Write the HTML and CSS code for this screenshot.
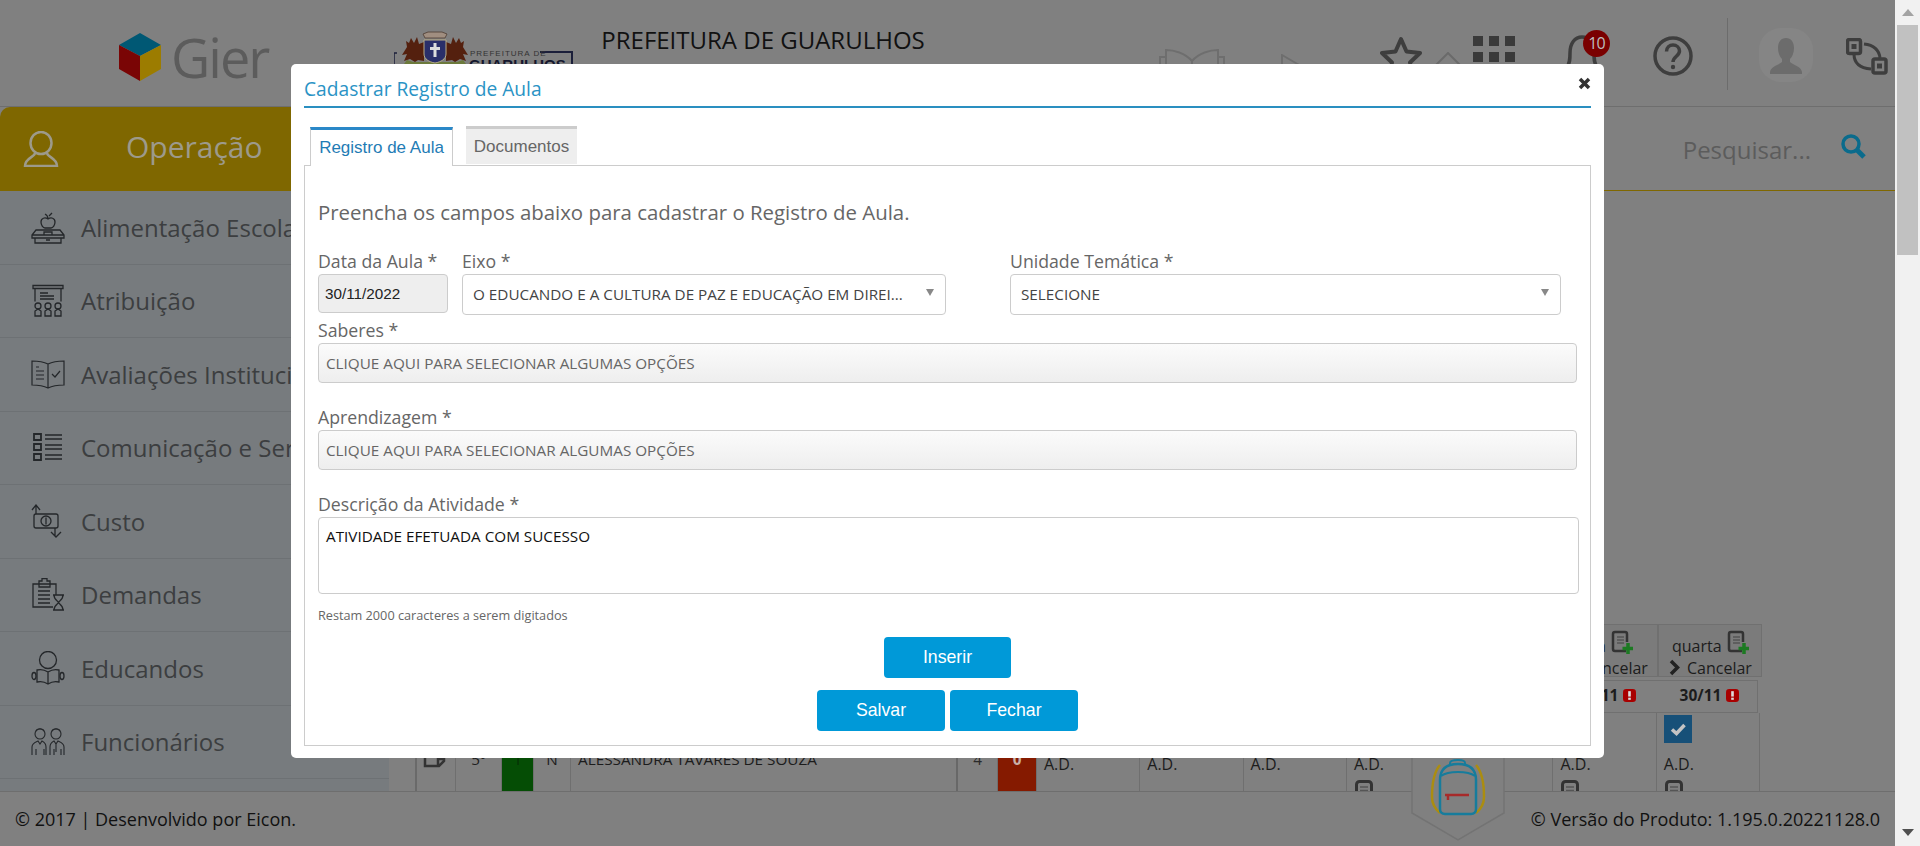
FILE: index.html
```html
<!DOCTYPE html>
<html lang="pt-BR">
<head>
    <meta charset="UTF-8">
    <title>Cadastrar Registro de Aula</title>
    <link rel="stylesheet" href="styles.css">
</head>
<body>

    <svg class="symbols" width="0" height="0">
        <symbol id="note" viewBox="0 0 18 24">
            <rect x="1.5" y="1.5" width="15" height="21" rx="3" fill="none" stroke="#333" stroke-width="3"/>
            <path d="M5 7h8M5 10.500h8M5 14h8" stroke="#555" stroke-width="1.500"/>
        </symbol>
        <symbol id="note-add" viewBox="0 0 22 26">
            <path d="M15 21H4a2 2 0 0 1-2-2V4a2 2 0 0 1 2-2h10a2 2 0 0 1 2 2v8" fill="none" stroke="#333" stroke-width="2.500"/>
            <path d="M6 7h7M6 10h7M6 13h7" stroke="#555" stroke-width="1.500"/>
            <path d="M17 13v11M11.500 18.500h11" stroke="#1c7a22" stroke-width="3.500"/>
        </symbol>
        <symbol id="alert" viewBox="0 0 12 12">
            <rect width="12" height="12" rx="3" fill="#a80000"/>
            <rect x="4.800" y="2" width="2.400" height="5" fill="#ddd"/>
            <rect x="4.800" y="8" width="2.400" height="2" fill="#ddd"/>
        </symbol>
        <symbol id="chevron" viewBox="0 0 11 17">
            <path d="M2 2l6.500 6.500L2 15" fill="none" stroke="#222" stroke-width="3.500"/>
        </symbol>
    </svg>

    <div class="page">
        <header class="topbar">
            <div class="brand">
                <svg class="brand-cube" viewBox="0 0 42 48">
                    <path d="M21 0l21 12-21 11L0 12z" fill="#005874"/>
                    <path d="M0 12l21 11v25L0 36z" fill="#7a0505"/>
                    <path d="M42 12L21 23v25l21-12z" fill="#9c7c00"/>
                </svg>
                <span class="brand-name">Gier</span>
            </div>
            <svg class="city-logo" viewBox="0 0 180 72">
                <path d="M3 22H0v34" fill="none" stroke="#1b1f3a" stroke-width="1.500"/>
                <path d="M146 21h32v40" fill="none" stroke="#1b1f3a" stroke-width="2"/>
                <path d="M13 29l6 2 44 0 6-2 3 4H10z" fill="#6c7a3c"/>
                <path d="M17 7l3 5 3-6 2 7 5-2v19l-6-1-3 2-5-3-6 2 3-7-5 1 5-8-1-6 3 2z" fill="#54200e"/>
                <path d="M65 7l-3 5-3-6-2 7-5-2v19l6-1 3 2 5-3 6 2-3-7 5 1-5-8 1-6-3 2z" fill="#54200e"/>
                <path d="M30 9h22v14c0 5-5 8-11 9-6-1-11-4-11-9z" fill="#2a2f6a" stroke="#b9ad86"/>
                <path d="M39.500 12h3v4h3.500v3h-3.500v7h-3v-7H36v-3h3.500z" fill="#dddddd"/>
                <path d="M29 3l5-2h14l5 2-2 4H31z" fill="#a08e80" stroke="#5a4a40"/>
                <text class="city-small" x="76" y="25">PREFEITURA DE</text>
                <text class="city-big" x="75" y="39">GUARULHOS</text>
            </svg>
            <span class="city-title">PREFEITURA DE GUARULHOS</span>
            <div class="top-icons">
                <svg class="icon-book" viewBox="0 0 66 50" fill="none" stroke="#6e6e6e" stroke-width="2">
                    <path d="M33 14C26 6 15 3 7 3v24M33 14c7-8 18-11 26-11v24M33 14v30M7 10H1v34M59 10h6v34"/>
                </svg>
                <svg class="icon-flag" viewBox="0 0 26 40" fill="none" stroke="#6e6e6e" stroke-width="2">
                    <path d="M1 1l24 14-16 6-8 18z"/>
                </svg>
                <svg class="icon-star" viewBox="0 0 42 42" fill="none" stroke="#3e3e3e" stroke-width="4" stroke-linejoin="round">
                    <path d="M21 3l5.500 12.500L40 17l-10 9.500L32.500 40 21 33.500 9.500 40 12 26.500 2 17l13.500-1.500z"/>
                </svg>
                <svg class="icon-house" viewBox="0 0 42 30" fill="none" stroke="#6a6a6a" stroke-width="2">
                    <path d="M1 21L21 1l20 20M7 16v14M35 16v14"/>
                </svg>
                <div class="icon-grid"><i></i><i></i><i></i><i></i><i></i><i></i><i></i><i></i><i></i></div>
                <div class="bell">
                    <svg viewBox="0 0 40 44" fill="none" stroke="#3e3e3e" stroke-width="3.500">
                        <path d="M5 33c3-4 3-8 3-14C8 9 13 3 20 3s12 6 12 16c0 6 0 10 3 14 1 2 0 3-2 3H7c-2 0-3-1-2-3z"/>
                    </svg>
                    <span class="bell-badge">10</span>
                </div>
                <svg class="icon-help" viewBox="0 0 40 40" fill="none" stroke="#3e3e3e" stroke-width="3.500">
                    <circle cx="20" cy="20" r="18"/>
                    <path d="M13.500 15.500c0-4 3-6.500 6.500-6.500s6.500 2.500 6.500 6c0 5-6.500 5.500-6.500 11"/>
                    <circle cx="20" cy="31" r="2.200" fill="#3e3e3e" stroke="none"/>
                </svg>
                <div class="top-divider"></div>
                <div class="avatar">
                    <svg viewBox="0 0 54 54" fill="#6c6c6c">
                        <path d="M27 10c5 0 8 4 8 10 0 5-2 9-4 11v3c3 3 11 4 12 10v2H11v-2c1-6 9-7 12-10v-3c-2-2-4-6-4-11 0-6 3-10 8-10z"/>
                    </svg>
                </div>
                <svg class="icon-swap" viewBox="0 0 42 37">
                    <rect x="1.500" y="1.500" width="13" height="14" rx="2" fill="none" stroke="#3e3e3e" stroke-width="3.500"/>
                    <rect x="5.500" y="6" width="5" height="5" fill="#3e3e3e"/>
                    <rect x="27" y="21" width="13" height="14" rx="2" fill="none" stroke="#3e3e3e" stroke-width="3.500"/>
                    <rect x="31" y="25.500" width="5" height="5" fill="#3e3e3e"/>
                    <path d="M8 16c0 8 5 14 17 15M18 6c9 1 15 5 16 14" fill="none" stroke="#3e3e3e" stroke-width="3"/>
                </svg>
            </div>
        </header>

        <nav class="navbar">
            <div class="nav-tab">
                <svg class="nav-user" viewBox="0 0 36 36" fill="none" stroke="#9d9a8b" stroke-width="2.500">
                    <ellipse cx="18" cy="12" rx="10.500" ry="11"/>
                    <path d="M12 22c0 4-10 5-10 13h32c0-8-10-9-10-13"/>
                </svg>
                <span class="nav-title">Operação</span>
            </div>
            <div class="search">
                <span class="search-text">Pesquisar...</span>
                <svg class="search-icon" viewBox="0 0 25 25" fill="none" stroke="#0a6b8c">
                    <circle cx="10" cy="10" r="8" stroke-width="3.500"/>
                    <path d="M16 16l7 7" stroke-width="5"/>
                </svg>
            </div>
        </nav>

        <div class="main">
            <aside class="sidebar">
                <a class="side-item">
                    <svg viewBox="0 0 34 34" fill="none" stroke="#24272a" stroke-width="1.300">
                        <path d="M17 9c-3-2-7-1-7 3 0 3 2 6 4 6h6c2 0 4-3 4-6 0-4-4-5-7-3zM17 9c0-2-1-4-3-5M18 6l3-3"/>
                        <path d="M5 20h24l4 5v3H1v-3zM1 25h32M4 28v5h26v-5M13 25v-3h8v3M15 30h4"/>
                    </svg>
                    Alimentação Escolar
                </a>
                <a class="side-item">
                    <svg viewBox="0 0 34 34" fill="none" stroke="#24272a" stroke-width="1.300">
                        <path d="M2 1.500h30v3H2zM4 4.500v13M30 4.500v13M9 9h8M9 12h14M9 15h14"/>
                        <path d="M4 32v-5l3-2 3 2v5zM14 32v-5l3-2 3 2v5zM24 32v-5l3-2 3 2v5z"/>
                        <circle cx="7" cy="22" r="3"/><circle cx="17" cy="22" r="3"/><circle cx="27" cy="22" r="3"/>
                    </svg>
                    Atribuição
                </a>
                <a class="side-item">
                    <svg viewBox="0 0 34 34" fill="none" stroke="#24272a" stroke-width="1.200">
                        <path d="M17 7C13 5 6 4 1 4v24c5 0 12 1 16 3 4-2 11-3 16-3V4c-5 0-12 1-16 3zM17 7v24"/>
                        <path d="M5 10h3M5 14h8M5 18h8M5 22h8M21 17l3 3 5-6"/>
                    </svg>
                    Avaliações Institucionais
                </a>
                <a class="side-item">
                    <svg viewBox="0 0 34 34" fill="none" stroke="#24272a">
                        <path d="M3 3h7v6H3zM3 13h7v6H3zM3 23h7v6H3z" stroke-width="1.800"/>
                        <path d="M14 4h17M14 8h17M14 14h17M14 18h17M14 24h17M14 28h17" stroke-width="1.400"/>
                    </svg>
                    Comunicação e Serviços
                </a>
                <a class="side-item">
                    <svg viewBox="0 0 34 34" fill="none" stroke="#24272a" stroke-width="1.300">
                        <path d="M5 10V2M1 6l4-5 4 5M24 24v8M20 28l5 5 5-5"/>
                        <rect x="3" y="10" width="24" height="14" rx="2"/>
                        <circle cx="15" cy="17" r="5"/>
                        <path d="M15 13.500v7"/>
                    </svg>
                    Custo
                </a>
                <a class="side-item">
                    <svg viewBox="0 0 34 34" fill="none" stroke="#24272a" stroke-width="1.300">
                        <path d="M22 29H2V6h6V3h3V0.500h5V3h3v3h6v11M8 6h11v3H8zM7 13h12M7 17h12M7 21h12M7 25h12"/>
                        <path d="M22 17h11M22 32h11M23 17c0 5 4 6 4.500 7.500C27 26 23 27 23 32M32 17c0 5-4 6-4.500 7.500C28 26 32 27 32 32"/>
                    </svg>
                    Demandas
                </a>
                <a class="side-item">
                    <svg viewBox="0 0 34 34" fill="none" stroke="#24272a" stroke-width="1.300">
                        <circle cx="17" cy="9" r="8.500"/>
                        <path d="M17 21c-3-2-7-3-11-2v12c4-1 8 0 11 2 3-2 7-3 11-2V19c-4-1-8 0-11 2zM17 21v12"/>
                        <ellipse cx="3" cy="25" rx="2" ry="3.500"/><ellipse cx="31" cy="25" rx="2" ry="3.500"/>
                    </svg>
                    Educandos
                </a>
                <a class="side-item">
                    <svg viewBox="0 0 34 34" fill="none" stroke="#24272a" stroke-width="1.100">
                        <circle cx="9" cy="9" r="5"/><circle cx="25" cy="9" r="5"/>
                        <path d="M5 6c1-3 7-3 8 0M21 6c1-3 7-3 8 0"/>
                        <path d="M1 30v-8c0-4 4-5 6-6l2 3 2-3c2 1 4 2 4 6v8M19 30v-8c0-4 2-5 4-6l2 3 2-3c2 1 6 2 6 6v8M5 24v6M13 24v6M23 24v6M30 24v6M25 19v8"/>
                    </svg>
                    Funcionários
                </a>
            </aside>

            <section class="content">
                <div class="table">
                    <div class="head-row">
                        <div class="head-cell">
                            <div class="head-day">terça <svg><use href="#note-add"/></svg></div>
                            <div class="head-link"><svg><use href="#chevron"/></svg>Cancelar</div>
                        </div>
                        <div class="head-cell">
                            <div class="head-day">quarta <svg><use href="#note-add"/></svg></div>
                            <div class="head-link"><svg><use href="#chevron"/></svg>Cancelar</div>
                        </div>
                    </div>
                    <div class="date-row">
                        <div class="date-cell">29/11 <svg><use href="#alert"/></svg></div>
                        <div class="date-cell">30/11 <svg><use href="#alert"/></svg></div>
                    </div>
                    <div class="student-row">
                        <div class="cell cell-icon">
                            <svg viewBox="0 0 23 23" fill="none" stroke="#333" stroke-width="2.500"><path d="M2 2h19v14l-5 5H2zM21 14h-6v6"/></svg>
                        </div>
                        <div class="cell cell-center">5º</div>
                        <div class="cell cell-center cell-green">1</div>
                        <div class="cell cell-center">N</div>
                        <div class="cell cell-name">ALESSANDRA TAVARES DE SOUZA</div>
                        <div class="cell cell-center cell-count">4</div>
                        <div class="cell cell-center cell-red">0</div>
                        <div class="cell cell-day"><span class="check check-empty"></span>A.D.</div>
                        <div class="cell cell-day"><span class="check check-empty"></span>A.D.</div>
                        <div class="cell cell-day"><span class="check check-empty"></span>A.D.</div>
                        <div class="cell cell-day"><span class="check check-empty"></span>A.D.<svg class="day-note"><use href="#note"/></svg></div>
                        <div class="cell cell-day"><span class="check check-empty"></span>A.D.<svg class="day-note"><use href="#note"/></svg></div>
                        <div class="cell cell-day"><span class="check check-empty"></span>A.D.<svg class="day-note"><use href="#note"/></svg></div>
                        <div class="cell cell-day">
                            <span class="check">
                                <svg viewBox="0 0 28 28" fill="none" stroke="#c4c4c4" stroke-width="3.500"><path d="M8 14.500l4.500 4L20.500 10"/></svg>
                            </span>A.D.<svg class="day-note"><use href="#note"/></svg>
                        </div>
                    </div>
                </div>
            </section>
        </div>

        <footer class="footer">
            <span>© 2017 | Desenvolvido por Eicon.</span>
            <span>© Versão do Produto: 1.195.0.20221128.0</span>
        </footer>

        <!-- selo da mochila, fica por cima do rodape -->
        <svg class="backpack" viewBox="0 0 94 94" fill="none">
            <path d="M1 1h92v65L47 93 1 66z" fill="#808080" stroke="#737373" stroke-width="1.500"/>
            <path d="M29 18C22 26 21 38 21 50c0 6 3 12 8 16M65 18c7 8 8 20 8 32 0 6-3 12-8 16" stroke="#ab8d10" stroke-width="2.500"/>
            <path d="M39 19v-3c0-2 2-3 8-3s7 1 7 3v3" stroke="#177c9c" stroke-width="2"/>
            <path d="M29 33c0-11 6-16 18-16s18 5 18 16v29c0 3-2 5-5 5H34c-3 0-5-2-5-5z" stroke="#177c9c" stroke-width="2.500"/>
            <path d="M30 29c4-3 10-4 17-4s13 1 17 4" stroke="#177c9c" stroke-width="2"/>
            <path d="M34 48h24M37 48v5" stroke="#a72a2a" stroke-width="2.500"/>
        </svg>

        <div class="backdrop"></div>

        <div class="modal">
            <div class="modal-header">
                <span class="modal-title">Cadastrar Registro de Aula</span>
                <svg class="modal-close" viewBox="0 0 13 13"><path d="M2 2l9 9M11 2l-9 9" stroke="#333" stroke-width="3.500"/></svg>
            </div>

            <div class="tabs">
                <div class="tab tab-active">Registro de Aula</div>
                <div class="tab">Documentos</div>
            </div>

            <div class="tab-pane">
                <p class="intro">Preencha os campos abaixo para cadastrar o Registro de Aula.</p>

                <div class="form-row">
                    <div class="field field-date">
                        <label>Data da Aula *</label>
                        <div class="input input-date">30/11/2022</div>
                    </div>
                    <div class="field field-eixo">
                        <label>Eixo *</label>
                        <div class="input input-select">O EDUCANDO E A CULTURA DE PAZ E EDUCAÇÃO EM DIREI...<span class="arrow"></span></div>
                    </div>
                    <div class="field field-unidade">
                        <label>Unidade Temática *</label>
                        <div class="input input-select">SELECIONE<span class="arrow"></span></div>
                    </div>
                </div>

                <div class="field field-saberes">
                    <label>Saberes *</label>
                    <div class="input input-multi">CLIQUE AQUI PARA SELECIONAR ALGUMAS OPÇÕES</div>
                </div>
                <div class="field field-aprendizagem">
                    <label>Aprendizagem *</label>
                    <div class="input input-multi">CLIQUE AQUI PARA SELECIONAR ALGUMAS OPÇÕES</div>
                </div>
                <div class="field field-descricao">
                    <label>Descrição da Atividade *</label>
                    <div class="input input-text">ATIVIDADE EFETUADA COM SUCESSO</div>
                </div>
                <p class="counter">Restam 2000 caracteres a serem digitados</p>

                <div class="actions">
                    <button class="btn">Inserir</button>
                </div>
                <div class="actions actions-last">
                    <button class="btn btn-wide">Salvar</button>
                    <button class="btn btn-wide">Fechar</button>
                </div>
            </div>
        </div>
    </div>

    <div class="scrollbar">
        <div class="scroll-up"></div>
        <div class="scroll-thumb"></div>
        <div class="scroll-down"></div>
    </div>

</body>
</html>
```

FILE: styles.css
```css
/* cores ja escurecidas pelo fundo do modal, so o modal e a barra de rolagem ficam claros */
body {
    font-family: "Open Sans", sans-serif;
    margin: 0;
    height: 846px;
    display: flex;
    overflow: hidden;
    background-color: #f1f1f1;
}

.symbols {
    position: absolute;
}

.page {
    position: relative;
    flex: 1;
    height: 846px;
    display: flex;
    flex-direction: column;
    background-color: #808080;
    overflow: hidden;
}

/* topo */
.topbar {
    height: 106px;
    flex-shrink: 0;
    display: flex;
    align-items: flex-start;
    border-bottom: 1px solid #6e6e6e;
}

.brand {
    display: flex;
    align-items: center;
    margin: 33px 0 0 119px;
}

.brand-cube {
    width: 42px;
    height: 48px;
}

.brand-name {
    font-size: 54px;
    line-height: 48px;
    letter-spacing: -2px;
    color: #5c5c5c;
    margin-left: 10px;
}

.city-logo {
    width: 180px;
    height: 72px;
    margin: 31px 0 0 126px;
}

.city-small {
    font-family: "Liberation Sans", sans-serif;
    font-size: 8px;
    letter-spacing: 1px;
    fill: #333;
}

.city-big {
    font-family: "Liberation Sans", sans-serif;
    font-size: 15px;
    font-weight: bold;
    fill: #14172e;
}

.city-title {
    font-size: 24px;
    line-height: 30px;
    margin: 25px 0 0 27px;
    color: #111;
    white-space: nowrap;
}

.top-icons {
    display: flex;
    align-items: flex-start;
    margin-left: auto;
}

.icon-book {
    width: 66px;
    height: 50px;
    margin-top: 47px;
}

.icon-flag {
    width: 26px;
    height: 40px;
    margin: 54px 0 0 56px;
}

.icon-star {
    width: 42px;
    height: 42px;
    margin: 36px 0 0 73px;
}

.icon-house {
    width: 42px;
    height: 30px;
    margin: 52px 0 0 5px;
}

.icon-grid {
    display: grid;
    grid-template-columns: repeat(3, 10px);
    grid-auto-rows: 10px;
    gap: 6px;
    margin: 36px 0 0 4px;
}

.icon-grid i {
    background-color: #3a3a3a;
}

.bell {
    position: relative;
    width: 40px;
    height: 44px;
    margin: 34px 3px 0 47px;
}

.bell svg {
    width: 40px;
    height: 44px;
}

.bell-badge {
    position: absolute;
    top: -4px;
    left: 21px;
    width: 27px;
    height: 27px;
    line-height: 27px;
    border-radius: 50%;
    background-color: #7a0000;
    color: #bdbdbd;
    font-size: 16px;
    text-align: center;
    letter-spacing: -1px;
}

.icon-help {
    width: 40px;
    height: 40px;
    margin: 36px 0 0 48px;
}

.top-divider {
    width: 1px;
    height: 72px;
    margin: 18px 0 0 34px;
    background-color: #6c6c6c;
}

.avatar {
    width: 54px;
    height: 54px;
    margin: 28px 0 0 31px;
    border-radius: 22px;
    background-color: #858585;
}

.avatar svg {
    width: 54px;
    height: 54px;
}

.icon-swap {
    width: 42px;
    height: 37px;
    margin: 38px 7px 0 33px;
}

/* barra do menu */
.navbar {
    height: 83px;
    flex-shrink: 0;
    display: flex;
    justify-content: space-between;
    border-bottom: 1px solid #7f6700;
}

.nav-tab {
    width: 389px;
    display: flex;
    align-items: center;
    background-color: #7f6700;
    border-top-left-radius: 10px;
}

.nav-user {
    width: 36px;
    height: 36px;
    margin-left: 23px;
}

.nav-title {
    font-size: 30px;
    line-height: 40px;
    margin: 0 0 4px 67px;
    color: #9d9a8b;
}

.search {
    display: flex;
    align-items: flex-start;
    padding: 23px 29px 0 0;
}

.search-text {
    font-size: 24px;
    line-height: 40px;
    color: #5c5c5c;
}

.search-icon {
    width: 25px;
    height: 25px;
    margin: 4px 0 0 30px;
}

.main {
    flex: 1;
    display: flex;
    overflow: hidden;
}

/* menu lateral */
.sidebar {
    width: 389px;
    flex-shrink: 0;
    background-color: #777b7e;
}

.side-item {
    display: flex;
    align-items: center;
    gap: 16px;
    box-sizing: border-box;
    height: 73.500px;
    padding-left: 31px;
    border-bottom: 1px solid #6d7174;
    font-size: 24px;
    color: #3c3e40;
    white-space: nowrap;
}

.side-item svg {
    width: 34px;
    height: 34px;
    flex-shrink: 0;
}

/* tabela que aparece atras do modal */
.content {
    flex: 1;
    overflow: hidden;
    padding-left: 26px;
}

.table {
    width: 1347px;
    margin-top: 433px;
    font-size: 16px;
    color: #1c1c1c;
}

.head-row,
.date-row {
    display: flex;
    justify-content: flex-end;
}

.head-row {
    height: 53px;
}

.head-cell {
    box-sizing: border-box;
    width: 104px;
    border: 1px solid #707070;
    background-color: #7b7b7b;
    padding: 5px 0 0 10px;
    line-height: 20px;
}

.head-day {
    display: flex;
    align-items: flex-end;
    gap: 5px;
    padding-left: 3px;
    height: 26px;
}

.head-day svg {
    width: 22px;
    height: 26px;
}

.head-link {
    display: flex;
    align-items: center;
    gap: 7px;
    height: 21px;
    margin-top: 1px;
    white-space: nowrap;
}

.head-link svg {
    width: 11px;
    height: 17px;
    flex-shrink: 0;
}

.date-row {
    box-sizing: border-box;
    height: 33px;
    width: 400px;
    margin: 3px 4px 0 auto;
    border: 1px solid #707070;
    border-left: 0;
    font-size: 15.500px;
    font-weight: bold;
}

.date-cell {
    box-sizing: border-box;
    width: 103px;
    padding: 0 0 3px 8px;
    display: flex;
    align-items: center;
    justify-content: center;
    gap: 5px;
}

.date-cell svg {
    width: 13px;
    height: 13px;
}

.student-row {
    display: grid;
    grid-template-columns: 39px 46px 32px 37px 387px 40px 39px repeat(7, 103.300px);
    height: 90px;
    border-left: 2px solid #6a6a6a;
    font-size: 15.300px;
}

.cell {
    box-sizing: border-box;
    border-right: 1px solid #6f6f6f;
    padding-top: 36px;
    line-height: 20px;
    min-width: 0;
}

.cell-center {
    text-align: center;
}

.cell-icon svg {
    width: 23px;
    height: 23px;
    margin: -4px 0 0 6px;
    display: block;
}

.cell-green {
    background-color: #054d05;
    color: #053005;
}

.cell-red {
    background-color: #851a00;
    color: #c9b1a8;
    font-weight: bold;
}

.cell-name {
    padding-left: 7px;
    border-right: 2px solid #686868;
    white-space: nowrap;
}

.cell-day {
    padding: 2px 0 0 7px;
    font-size: 16px;
}

.cell-count {
    color: #2a2a2a;
}

.check {
    display: block;
    width: 28px;
    height: 28px;
    margin-bottom: 11px;
    background-color: #175078;
}

.check-empty {
    visibility: hidden;
}

.check svg {
    display: block;
}

.day-note {
    display: block;
    width: 18px;
    height: 24px;
    margin: 6px 0 0 1px;
}

/* rodape */
.footer {
    position: relative;
    height: 54px;
    flex-shrink: 0;
    display: flex;
    justify-content: space-between;
    align-items: center;
    padding: 0 15px;
    border-top: 1px solid #6e6e6e;
    background-color: #808080;
    font-size: 18px;
    color: #111;
}

.backpack {
    position: absolute;
    left: 1411px;
    top: 747px;
    width: 94px;
    height: 94px;
}

.backdrop {
    position: absolute;
    inset: 0;
}

/* modal */
.modal {
    position: absolute;
    top: 64px;
    left: 0;
    right: 0;
    margin: 0 auto;
    box-sizing: border-box;
    width: 1313px;
    height: 694px;
    padding: 0 13px;
    background-color: white;
    border-radius: 5px;
}

.modal-header {
    display: flex;
    justify-content: space-between;
    box-sizing: border-box;
    height: 44px;
    padding-top: 13px;
    border-bottom: 2px solid #2a8fc0;
}

.modal-title {
    font-size: 19.200px;
    line-height: 24px;
    color: #2a93c5;
}

.modal-close {
    width: 13px;
    height: 13px;
}

.tabs {
    display: flex;
    align-items: flex-start;
    gap: 13px;
    margin: 18px 0 -1px 6px;
    font-family: "Liberation Sans", sans-serif;
    font-size: 17px;
}

.tab {
    box-sizing: border-box;
    width: 111px;
    height: 38px;
    line-height: 36px;
    text-align: center;
    border-top: 3px solid #cccccc;
    background-color: #eeeeee;
    color: #666666;
}

.tab-active {
    position: relative;
    width: 143px;
    height: 39px;
    margin-top: 1px;
    border: 1px solid #cccccc;
    border-top: 3px solid #2a88c8;
    border-bottom: 0;
    background-color: white;
    color: #1f7cb5;
}

.tab-pane {
    box-sizing: border-box;
    height: 581px;
    padding: 34px 13px 0;
    border: 1px solid #cccccc;
}

.intro {
    margin: 0 0 28px;
    font-size: 20.400px;
    line-height: 24px;
    color: #666666;
}

.form-row {
    display: flex;
}

.field label {
    display: block;
    height: 20px;
    margin-bottom: 2px;
    font-size: 17.700px;
    line-height: 18px;
    color: #666666;
    white-space: nowrap;
}

.field-date {
    width: 130px;
}

.field-eixo {
    width: 484px;
    margin-left: 14px;
}

.field-unidade {
    width: 551px;
    margin-left: 64px;
}

.field-saberes {
    margin-top: 6px;
    width: 1259px;
}

.field-aprendizagem {
    margin-top: 25px;
    width: 1259px;
}

.field-descricao {
    margin-top: 25px;
    width: 1261px;
}

.input {
    box-sizing: border-box;
    position: relative;
    border: 1px solid #cccccc;
    border-radius: 4px;
    font-size: 15.270px;
    white-space: nowrap;
}

.input-date {
    height: 39px;
    line-height: 37px;
    padding-left: 6px;
    background-color: #eeeeee;
    font-family: "Liberation Sans", sans-serif;
    color: #222222;
}

.input-select {
    height: 41px;
    line-height: 39px;
    padding-left: 10px;
    color: #444444;
}

.arrow {
    position: absolute;
    top: 14px;
    right: 11px;
    border-style: solid;
    border-width: 7px 4.500px 0;
    border-color: #888888 transparent transparent;
}

.input-multi {
    height: 40px;
    line-height: 38px;
    padding-left: 7px;
    background: linear-gradient(#fbfbfb, #eeeeee);
    color: #666666;
}

.input-text {
    height: 77px;
    padding: 6px 7px;
    line-height: 24px;
    color: #111111;
}

.counter {
    margin: 13px 0 0;
    font-size: 12.700px;
    line-height: 17px;
    color: #666666;
}

.actions {
    display: flex;
    justify-content: center;
    gap: 5px;
    margin-top: 13px;
}

.actions-last {
    margin-top: 12px;
}

.btn {
    width: 127px;
    height: 41px;
    padding: 0;
    border: none;
    border-radius: 4px;
    background-color: #0099d8;
    color: white;
    font-family: "Liberation Sans", sans-serif;
    font-size: 17.700px;
    cursor: pointer;
}

.btn-wide {
    width: 128px;
}

/* barra de rolagem */
.scrollbar {
    width: 25px;
    height: 846px;
    flex-shrink: 0;
    display: flex;
    flex-direction: column;
    align-items: center;
}

.scroll-up,
.scroll-down {
    width: 0;
    border-style: solid;
    border-color: transparent;
}

.scroll-up {
    margin-top: 9px;
    border-width: 0 6px 7px;
    border-bottom-color: #a3a3a3;
}

.scroll-thumb {
    width: 21px;
    height: 230px;
    margin-top: 9px;
    background-color: #c1c1c1;
}

.scroll-down {
    margin-top: 574px;
    border-width: 7px 6px 0;
    border-top-color: #505050;
}
```
